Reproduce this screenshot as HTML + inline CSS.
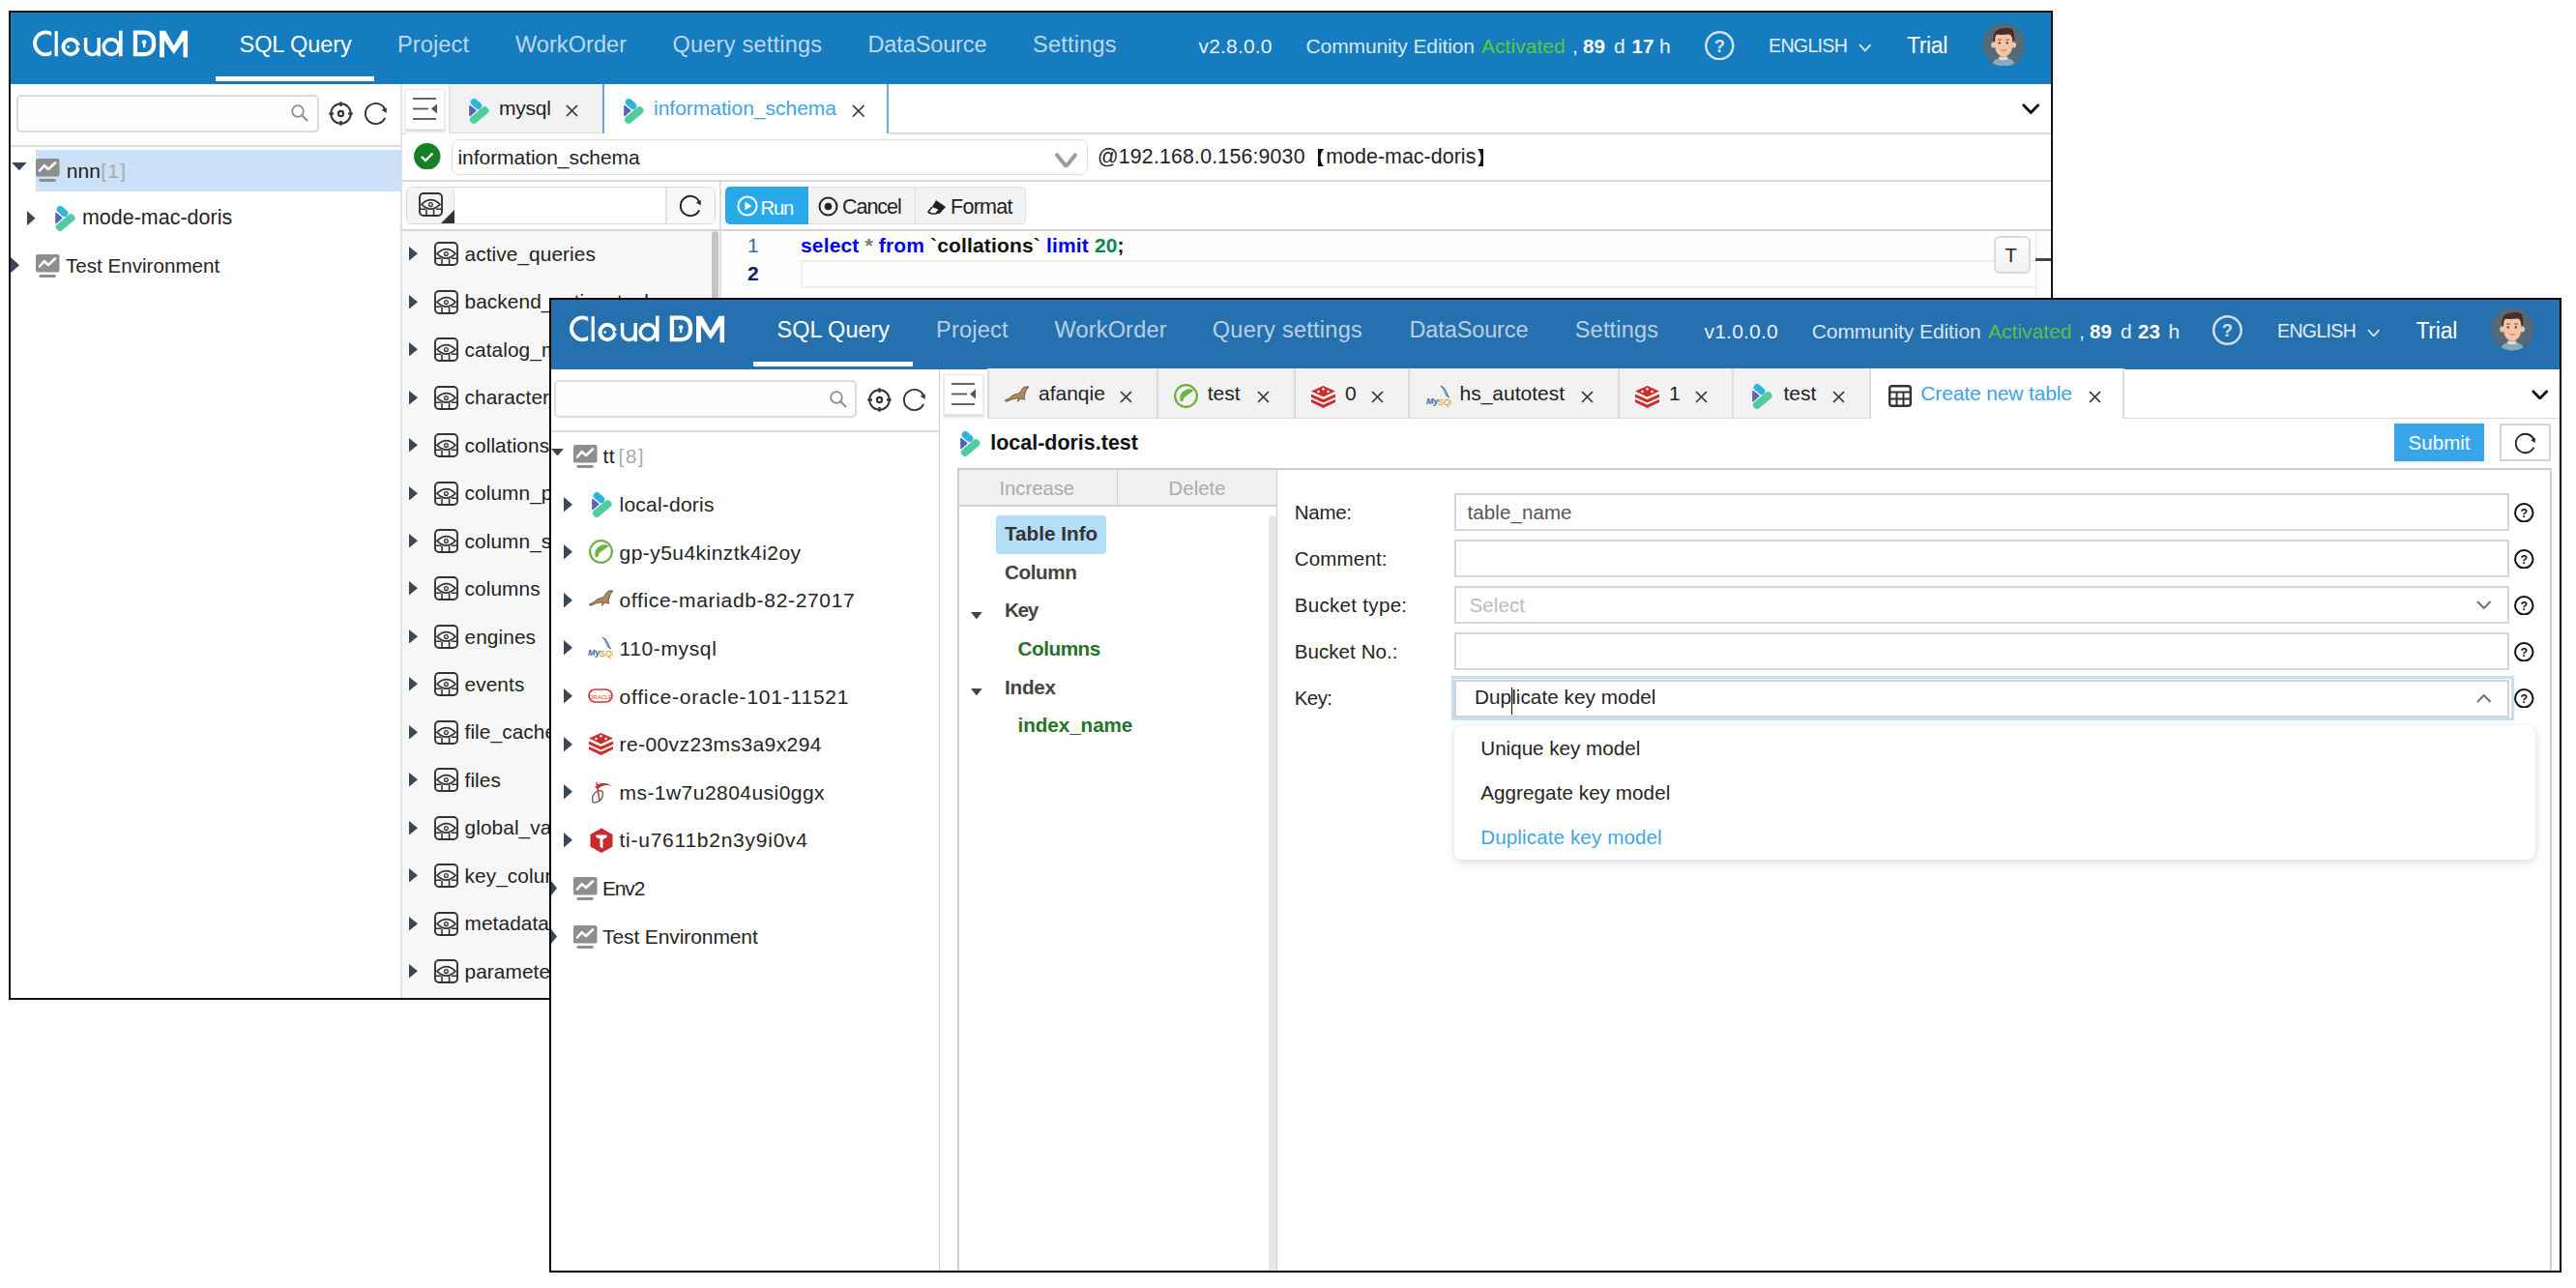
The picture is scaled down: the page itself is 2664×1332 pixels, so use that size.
<!DOCTYPE html><html><head><meta charset="utf-8"><style>
html,body{margin:0;padding:0;background:#fff;width:2664px;height:1332px;overflow:hidden;font-family:"Liberation Sans", sans-serif;}
div,svg{position:absolute;box-sizing:border-box}
.t{white-space:nowrap;line-height:1}
</style></head><body>
<div style="left:9px;top:11px;width:2114px;height:1023px;border:2px solid #151515;background:#fff"></div>
<div style="left:11px;top:13px;width:2110px;height:74px;background:#157CC0"></div>
<svg style="left:0px;top:0px;" width="200" height="70" viewBox="0 0 200 70"><clipPath id="cclip0"><rect x="30" y="28" width="23.2" height="34"/></clipPath>
<g fill="none" stroke="#fff">
<circle cx="47.4" cy="44.85" r="11.45" stroke-width="3.8" clip-path="url(#cclip0)"/>
<circle cx="73.15" cy="48.5" r="7.7" stroke-width="4"/>
<path d="M88.6 39 V49.65 A6.8 6.8 0 0 0 102.2 49.65 V39 M102.2 49 V58.2" stroke-width="3.4"/>
<circle cx="115.05" cy="48.5" r="7.85" stroke-width="3.6"/>
<path d="M139.95 33.65 H149.6 A9 9 0 0 1 158.95 42.65 V47.05 A9 9 0 0 1 149.6 56.05 H139.95 Z" stroke-width="4.3"/>
</g>
<g fill="#fff">
<rect x="56.6" y="32.2" width="3.2" height="26"/>
<rect x="123" y="31.7" width="3.6" height="26.5"/>
<circle cx="70.7" cy="48.6" r="1.45"/>
<circle cx="149.1" cy="43.6" r="2.3"/><rect x="148" y="44" width="2.3" height="5.2"/>
<path d="M165.1 31.7 H171 L179.8 47.2 L188.6 31.7 H194.1 V59.3 H189.5 V42 L179.8 56 L170 42 V59.3 H165.1 Z"/>
</g>
<path d="M80 46.9 L84.5 46.9 L84.5 50.6 L82.2 50.6 Z" fill="#157CC0"/>
</svg>
<div class="t" style="left:247.50px;top:34.61px;font-size:23.5px;color:#fff;letter-spacing:-0.047px;">SQL Query</div>
<div style="left:223px;top:79px;width:164px;height:4.5px;background:#fff"></div>
<div class="t" style="left:411.00px;top:34.61px;font-size:23.5px;color:#BFD7EC;letter-spacing:0.146px;">Project</div>
<div class="t" style="left:533.00px;top:34.61px;font-size:23.5px;color:#BFD7EC;letter-spacing:0.062px;">WorkOrder</div>
<div class="t" style="left:695.50px;top:34.61px;font-size:23.5px;color:#BFD7EC;letter-spacing:0.231px;">Query settings</div>
<div class="t" style="left:897.50px;top:34.61px;font-size:23.5px;color:#BFD7EC;letter-spacing:-0.125px;">DataSource</div>
<div class="t" style="left:1068.00px;top:34.61px;font-size:23.5px;color:#BFD7EC;letter-spacing:0.232px;">Settings</div>
<div class="t" style="left:1239.50px;top:37.22px;font-size:21px;color:#EAF2F9;letter-spacing:0.179px;">v2.8.0.0</div>
<div class="t" style="left:1350.50px;top:37.22px;font-size:21px;color:#D9E8F4;letter-spacing:-0.109px;">Community Edition</div>
<div class="t" style="left:1532.00px;top:37.22px;font-size:21px;color:#5CC93A;letter-spacing:0.047px;">Activated</div>
<div class="t" style="left:1626.00px;top:37.22px;font-size:21px;color:#EAF2F9;">,</div>
<div class="t" style="left:1637.00px;top:37.65px;font-size:20.5px;color:#fff;font-weight:700;">89</div>
<div class="t" style="left:1669.00px;top:37.22px;font-size:21px;color:#EAF2F9;">d</div>
<div class="t" style="left:1687.50px;top:37.65px;font-size:20.5px;color:#fff;font-weight:700;">17</div>
<div class="t" style="left:1716.00px;top:37.22px;font-size:21px;color:#EAF2F9;">h</div>
<svg style="left:1763px;top:31.5px;" width="30.5" height="30.5" viewBox="0 0 30.5 30.5"><circle cx="15.25" cy="15.25" r="14.0" fill="none" stroke="#D3E3F0" stroke-width="2.5" opacity="1"/><text x="15.25" y="21.655" text-anchor="middle" font-family="Liberation Sans" font-weight="bold" font-size="18.3" fill="#D3E3F0" opacity="1">?</text></svg>
<div class="t" style="left:1829.00px;top:37.71px;font-size:19.6px;color:#E6EFF7;letter-spacing:-0.688px;">ENGLISH</div>
<svg style="left:1921.5px;top:45px;" width="13.5" height="8.5" viewBox="0 0 13.5 8.5"><path d="M1 1 L6.75 7.5 L12.5 1" fill="none" stroke="#E6EFF7" stroke-width="1.8"/></svg>
<div class="t" style="left:1972.00px;top:35.83px;font-size:23px;color:#fff;letter-spacing:-0.369px;">Trial</div>
<svg style="left:2049.75px;top:23.75px;" width="44.5" height="44.5" viewBox="0 0 44.5 44.5"><clipPath id="av2072"><circle cx="22.25" cy="22.25" r="22.25"/></clipPath>
<g clip-path="url(#av2072)">
<rect width="44.5" height="44.5" fill="#546A78"/>
<ellipse cx="22" cy="45" rx="12.5" ry="9.8" fill="#8EA9B6"/>
<ellipse cx="21.8" cy="36" rx="4.6" ry="2.2" fill="#D5E3EA"/>
<rect x="18.6" y="29" width="6.4" height="6.6" fill="#E5A38A"/>
<ellipse cx="11.6" cy="22.5" rx="2.4" ry="3" fill="#F6C4A4"/>
<ellipse cx="32.6" cy="22.5" rx="2.4" ry="3" fill="#F6C4A4"/>
<path d="M13 16 Q13 10.5 22 10.5 Q31.4 10.5 31.4 16 L31 26 Q29 34 22.2 34.5 Q15.2 34 13.4 26 Z" fill="#F6C4A4"/>
<path d="M11.2 18.5 Q10.5 6 21 5.5 Q27 4 29.5 6 L30.5 5.5 Q33.8 9.5 33.2 18.5 L31.3 18 Q31 12.8 28.2 11.2 Q21 12.6 14 11.6 Q13.1 14 13.1 18.5 Z" fill="#4A2B25"/>
<rect x="16" y="16.6" width="4" height="0.9" fill="#6B4A40"/><rect x="24" y="16.6" width="4" height="0.9" fill="#6B4A40"/>
<circle cx="17.8" cy="20.5" r="1.15" fill="#5A3A30"/><circle cx="25.8" cy="20.5" r="1.15" fill="#5A3A30"/>
<path d="M19.3 27.3 Q22.2 30 25.1 27.3" fill="none" stroke="#C87D66" stroke-width="1"/>
</g></svg>
<div style="left:17px;top:98px;width:312.5px;height:39px;border:2px solid #D9DBDF;border-radius:5px;background:#FDFDFE"></div>
<svg style="left:300.5px;top:108.2px;" width="18" height="18" viewBox="0 0 18 18"><circle cx="7" cy="7" r="5.8" fill="none" stroke="#8A8F99" stroke-width="1.8"/><line x1="11.2" y1="11.2" x2="16.5" y2="16.5" stroke="#8A8F99" stroke-width="2" stroke-linecap="round"/></svg>
<svg style="left:340.1px;top:104.9px;" width="25" height="25" viewBox="0 0 25 25"><circle cx="12.5" cy="12.5" r="10.3" fill="none" stroke="#333" stroke-width="1.9"/><circle cx="12.5" cy="12.5" r="2.6" fill="none" stroke="#333" stroke-width="2.1"/><g stroke="#333" stroke-width="2.3"><line x1="12.5" y1="0.3" x2="12.5" y2="5"/><line x1="12.5" y1="20" x2="12.5" y2="24.7"/><line x1="0.3" y1="12.5" x2="5" y2="12.5"/><line x1="20" y1="12.5" x2="24.7" y2="12.5"/></g></svg>
<svg style="left:375.5px;top:104.9px;" width="25" height="25" viewBox="0 0 25 25"><path d="M22.1 17 A10.6 10.6 0 1 1 22.1 8" fill="none" stroke="#333" stroke-width="1.9"/><path d="M23.6 12 L18.6 8.6 L23.8 6.6 Z" fill="#333"/></svg>
<div style="left:11px;top:150px;width:403px;height:2px;background:#DCDCDC"></div>
<div style="left:414px;top:87px;width:1.5px;height:946px;background:#E2E2E2"></div>
<div style="left:36.5px;top:154.5px;width:378px;height:43px;background:#CCE1F7"></div>
<svg style="left:12px;top:167.5px;" width="15.7" height="8.3" viewBox="0 0 15.7 8.3"><path d="M0 0 L15.7 0 L7.85 8.3 Z" fill="#3C4858"/></svg>
<svg style="left:37.4px;top:164px;" width="25" height="24" viewBox="0 0 25 24"><rect x="0" y="0" width="24.5" height="18.6" rx="2.2" fill="#8E8E8E"/>
<polyline points="4,12.5 8.8,7.2 13,11 20,4.5" fill="none" stroke="#fff" stroke-width="2.6" stroke-linejoin="round" stroke-linecap="round"/>
<rect x="3.4" y="21" width="17.4" height="3" rx="1.4" fill="#8E8E8E"/></svg>
<div class="t" style="left:68.80px;top:166.02px;font-size:21px;color:#222;">nnn</div>
<div class="t" style="left:104.30px;top:166.02px;font-size:21px;color:#ABABAB;letter-spacing:1.162px;">[1]</div>
<svg style="left:28px;top:218px;" width="8.5" height="15.3" viewBox="0 0 8.5 15.3"><path d="M0 0 L8.5 7.65 L0 15.3 Z" fill="#3C4858"/></svg>
<svg style="left:56.5px;top:213px;" width="21" height="26" viewBox="0 0 21 26"><line x1="5.3" y1="3.6" x2="9.7" y2="7.5" stroke="#2FB5DC" stroke-width="7.2" stroke-linecap="round"/>
<path d="M0.9 7.6 L0.9 17.6 L6.8 12.4 Z" fill="#5068B8" stroke="#5068B8" stroke-width="1.4" stroke-linejoin="round"/>
<line x1="4.9" y1="21.8" x2="16.4" y2="12.3" stroke="#50CD9C" stroke-width="8" stroke-linecap="round"/></svg>
<div class="t" style="left:85.00px;top:214.58px;font-size:21.4px;color:#242424;letter-spacing:0.048px;">mode-mac-doris</div>
<svg style="left:11px;top:266.4px;" width="9" height="16.3" viewBox="0 0 9 16.3"><path d="M0 0 L9 8.15 L0 16.3 Z" fill="#3C4858"/></svg>
<svg style="left:37.4px;top:262.7px;" width="25" height="24" viewBox="0 0 25 24"><rect x="0" y="0" width="24.5" height="18.6" rx="2.2" fill="#8E8E8E"/>
<polyline points="4,12.5 8.8,7.2 13,11 20,4.5" fill="none" stroke="#fff" stroke-width="2.6" stroke-linejoin="round" stroke-linecap="round"/>
<rect x="3.4" y="21" width="17.4" height="3" rx="1.4" fill="#8E8E8E"/></svg>
<div class="t" style="left:68.00px;top:265.06px;font-size:20.6px;color:#242424;letter-spacing:0.008px;">Test Environment</div>
<div style="left:419px;top:92px;width:41px;height:42px;background:#fff;border:1px solid #EBEBEB;box-shadow:0 2px 3px rgba(0,0,0,0.18);box-sizing:border-box"></div>
<svg style="left:427px;top:101px;" width="26" height="24" viewBox="0 0 26 24"><g stroke="#555" stroke-width="1.8"><line x1="0" y1="1" x2="24" y2="1"/><line x1="0" y1="11.5" x2="16" y2="11.5"/><line x1="0" y1="22" x2="24" y2="22"/></g><path d="M25 6.5 L19 11.5 L25 16.5 Z" fill="#555"/></svg>
<div style="left:464px;top:87px;width:160px;height:50.5px;background:#F2F2F2;border-left:1.5px solid #DADADA;border-bottom:1.5px solid #D9D9D9"></div>
<svg style="left:485px;top:102px;" width="21" height="26" viewBox="0 0 21 26"><line x1="5.3" y1="3.6" x2="9.7" y2="7.5" stroke="#2FB5DC" stroke-width="7.2" stroke-linecap="round"/>
<path d="M0.9 7.6 L0.9 17.6 L6.8 12.4 Z" fill="#5068B8" stroke="#5068B8" stroke-width="1.4" stroke-linejoin="round"/>
<line x1="4.9" y1="21.8" x2="16.4" y2="12.3" stroke="#50CD9C" stroke-width="8" stroke-linecap="round"/></svg>
<div class="t" style="left:516.00px;top:100.97px;font-size:21px;color:#222;letter-spacing:-0.219px;">mysql</div>
<svg style="left:585px;top:108px;" width="13" height="13" viewBox="0 0 13 13"><path d="M1 1 L12 12 M12 1 L1 12" stroke="#333" stroke-width="1.7"/></svg>
<div style="left:623px;top:87px;width:296px;height:51px;background:#fff;border-left:2px solid #6FA6E6;border-right:2px solid #6FA6E6"></div>
<svg style="left:644.5px;top:102px;" width="21" height="26" viewBox="0 0 21 26"><line x1="5.3" y1="3.6" x2="9.7" y2="7.5" stroke="#2FB5DC" stroke-width="7.2" stroke-linecap="round"/>
<path d="M0.9 7.6 L0.9 17.6 L6.8 12.4 Z" fill="#5068B8" stroke="#5068B8" stroke-width="1.4" stroke-linejoin="round"/>
<line x1="4.9" y1="21.8" x2="16.4" y2="12.3" stroke="#50CD9C" stroke-width="8" stroke-linecap="round"/></svg>
<div class="t" style="left:676.00px;top:100.97px;font-size:21px;color:#3DA5E4;letter-spacing:-0.007px;">information_schema</div>
<svg style="left:881px;top:108px;" width="13.5" height="13.5" viewBox="0 0 13.5 13.5"><path d="M1 1 L12.5 12.5 M12.5 1 L1 12.5" stroke="#333" stroke-width="1.7"/></svg>
<div style="left:919px;top:137px;width:1202px;height:1.5px;background:#DCDCDC"></div>
<div style="left:415px;top:137px;width:4px;height:1.5px;background:#DCDCDC"></div>
<svg style="left:2091px;top:107px;" width="18.5" height="10.5" viewBox="0 0 18.5 10.5"><path d="M1 1 L9.25 9.5 L17.5 1" fill="none" stroke="#111" stroke-width="2.8"/></svg>
<svg style="left:428px;top:147.5px;" width="27.5" height="27.5" viewBox="0 0 27.5 27.5"><circle cx="13.75" cy="13.75" r="13.75" fill="#177F28"/><path d="M8 14 L12 18 L19.5 10.5" fill="none" stroke="#fff" stroke-width="2.4"/></svg>
<div style="left:467px;top:144px;width:658px;height:37px;border:1.5px solid #DCDCDC;border-radius:8px;background:#fff"></div>
<div class="t" style="left:473.50px;top:152.22px;font-size:21px;color:#222;letter-spacing:-0.051px;">information_schema</div>
<svg style="left:1091px;top:157.5px;" width="23" height="15" viewBox="0 0 23 15"><path d="M1 1 L11.5 14 L22 1" fill="none" stroke="#9B9B9B" stroke-width="4"/></svg>
<div class="t" style="left:1135.00px;top:151.97px;font-size:21.3px;color:#222;letter-spacing:0.188px;">@192.168.0.156:9030</div>
<svg style="left:1362.6px;top:153.6px;" width="6.2" height="18.2" viewBox="0 0 6.2 18.2"><path d="M6.2 0 H0 V18.2 H6.2 Q2.6 14.5 2.6 9.1 Q2.6 3.7 6.2 0 Z" fill="#111"/></svg>
<div class="t" style="left:1371.20px;top:151.88px;font-size:21.4px;color:#222;letter-spacing:0.048px;">mode-mac-doris</div>
<svg style="left:1527.8px;top:153.6px;" width="6.2" height="18.2" viewBox="0 0 6.2 18.2"><path d="M0 0 H6.2 V18.2 H0 Q3.6 14.5 3.6 9.1 Q3.6 3.7 0 0 Z" fill="#111"/></svg>
<div style="left:415px;top:186px;width:1706px;height:2px;background:#D9D9D9"></div>
<div style="left:419.5px;top:193px;width:320px;height:38.5px;border:1.5px solid #DADADA;border-radius:6px;background:#fff"></div>
<div style="left:420.5px;top:194px;width:49.5px;height:36.5px;background:#F4F4F4;border-right:1px solid #E2E2E2;border-radius:5px 0 0 5px"></div>
<svg style="left:432.5px;top:199px;" width="25" height="25" viewBox="0 0 25 25"><rect x="1" y="1" width="23" height="23" rx="4" fill="none" stroke="#333" stroke-width="1.9"/>
<path d="M3 12.4 Q12.5 3 22 12.4 Q12.5 21.8 3 12.4 Z" fill="none" stroke="#333" stroke-width="1.6"/>
<circle cx="12.4" cy="12.6" r="1.9" fill="none" stroke="#333" stroke-width="1.3"/>
<path d="M1 17.3 H7 M18 17.3 H24 M8 17.5 V24 M15.6 17.5 V24" stroke="#333" stroke-width="1.6"/></svg>
<svg style="left:456px;top:217px;" width="14" height="14" viewBox="0 0 14 14"><path d="M14 0 L14 14 L0 14 Z" fill="#333"/></svg>
<div style="left:688px;top:194px;width:1.5px;height:36.5px;background:#E2E2E2"></div>
<div style="left:689.5px;top:194px;width:49px;height:36.5px;background:#F8F8F8;border-radius:0 5px 5px 0"></div>
<svg style="left:701.5px;top:201px;" width="24" height="24" viewBox="0 0 25 25"><path d="M22.1 17 A10.6 10.6 0 1 1 22.1 8" fill="none" stroke="#222" stroke-width="2"/><path d="M23.6 12 L18.6 8.6 L23.8 6.6 Z" fill="#222"/></svg>
<div style="left:744px;top:187px;width:1.5px;height:846px;background:#DEDEDE"></div>
<div style="left:750px;top:192.5px;width:86px;height:39.5px;background:#27A9EA;border-radius:5px 0 0 5px"></div>
<svg style="left:762px;top:201.5px;" width="22" height="22" viewBox="0 0 22 22"><circle cx="11" cy="11" r="9.6" fill="none" stroke="#fff" stroke-width="2"/><path d="M8.5 6.5 L15.5 11 L8.5 15.5 Z" fill="#fff"/></svg>
<div class="t" style="left:786.50px;top:205.32px;font-size:20.3px;color:#fff;letter-spacing:-1.262px;">Run</div>
<div style="left:836px;top:192.5px;width:225px;height:39.5px;background:#F3F3F3;border:1.5px solid #DFDFDF;border-left:none;border-radius:0 5px 5px 0"></div>
<div style="left:945.5px;top:193.5px;width:1.5px;height:38px;background:#DFDFDF"></div>
<svg style="left:846px;top:203px;" width="21" height="21" viewBox="0 0 21 21"><circle cx="10.5" cy="10.5" r="9" fill="none" stroke="#222" stroke-width="2"/><circle cx="10.5" cy="10.5" r="3.8" fill="#222"/></svg>
<div class="t" style="left:871.00px;top:204.30px;font-size:21.5px;color:#222;letter-spacing:-1.025px;">Cancel</div>
<svg style="left:958.5px;top:206px;" width="20" height="16" viewBox="0 0 20 16"><path d="M9 1 L19 8 L12.5 15 L1 15 Z" fill="#222"/><path d="M5 8 L1 13 L4 15 L9 15 L12 11" fill="#fff" stroke="#222" stroke-width="1.6"/></svg>
<div class="t" style="left:983.00px;top:204.30px;font-size:21.5px;color:#222;letter-spacing:-0.725px;">Format</div>
<div style="left:415px;top:237px;width:1706px;height:1.5px;background:#D5D5D5"></div>
<div style="left:415.5px;top:238.5px;width:328.5px;height:794.5px;background:#F7F7F7"></div>
<div style="left:735.5px;top:239px;width:7.5px;height:794px;background:#C4C4C4;border-radius:4px"></div>
<svg style="left:423px;top:255.3px;" width="9" height="14.6" viewBox="0 0 9 14.6"><path d="M0 0 L9 7.3 L0 14.6 Z" fill="#3C4858"/></svg>
<svg style="left:448.8px;top:250.3px;" width="25" height="25" viewBox="0 0 25 25"><rect x="1" y="1" width="23" height="23" rx="4" fill="none" stroke="#333" stroke-width="1.9"/>
<path d="M3 12.4 Q12.5 3 22 12.4 Q12.5 21.8 3 12.4 Z" fill="none" stroke="#333" stroke-width="1.6"/>
<circle cx="12.4" cy="12.6" r="1.9" fill="none" stroke="#333" stroke-width="1.3"/>
<path d="M1 17.3 H7 M18 17.3 H24 M8 17.5 V24 M15.6 17.5 V24" stroke="#333" stroke-width="1.6"/></svg>
<div class="t" style="left:480.50px;top:252.99px;font-size:20.8px;color:#222;letter-spacing:0.100px;">active_queries</div>
<svg style="left:423px;top:304.75px;" width="9" height="14.6" viewBox="0 0 9 14.6"><path d="M0 0 L9 7.3 L0 14.6 Z" fill="#3C4858"/></svg>
<svg style="left:448.8px;top:299.75px;" width="25" height="25" viewBox="0 0 25 25"><rect x="1" y="1" width="23" height="23" rx="4" fill="none" stroke="#333" stroke-width="1.9"/>
<path d="M3 12.4 Q12.5 3 22 12.4 Q12.5 21.8 3 12.4 Z" fill="none" stroke="#333" stroke-width="1.6"/>
<circle cx="12.4" cy="12.6" r="1.9" fill="none" stroke="#333" stroke-width="1.3"/>
<path d="M1 17.3 H7 M18 17.3 H24 M8 17.5 V24 M15.6 17.5 V24" stroke="#333" stroke-width="1.6"/></svg>
<div class="t" style="left:480.50px;top:302.44px;font-size:20.8px;color:#222;letter-spacing:0.100px;">backend_active_tasks</div>
<svg style="left:423px;top:354.2px;" width="9" height="14.6" viewBox="0 0 9 14.6"><path d="M0 0 L9 7.3 L0 14.6 Z" fill="#3C4858"/></svg>
<svg style="left:448.8px;top:349.2px;" width="25" height="25" viewBox="0 0 25 25"><rect x="1" y="1" width="23" height="23" rx="4" fill="none" stroke="#333" stroke-width="1.9"/>
<path d="M3 12.4 Q12.5 3 22 12.4 Q12.5 21.8 3 12.4 Z" fill="none" stroke="#333" stroke-width="1.6"/>
<circle cx="12.4" cy="12.6" r="1.9" fill="none" stroke="#333" stroke-width="1.3"/>
<path d="M1 17.3 H7 M18 17.3 H24 M8 17.5 V24 M15.6 17.5 V24" stroke="#333" stroke-width="1.6"/></svg>
<div class="t" style="left:480.50px;top:351.89px;font-size:20.8px;color:#222;letter-spacing:0.100px;">catalog_meta_cache_statistics</div>
<svg style="left:423px;top:403.65000000000003px;" width="9" height="14.6" viewBox="0 0 9 14.6"><path d="M0 0 L9 7.3 L0 14.6 Z" fill="#3C4858"/></svg>
<svg style="left:448.8px;top:398.65000000000003px;" width="25" height="25" viewBox="0 0 25 25"><rect x="1" y="1" width="23" height="23" rx="4" fill="none" stroke="#333" stroke-width="1.9"/>
<path d="M3 12.4 Q12.5 3 22 12.4 Q12.5 21.8 3 12.4 Z" fill="none" stroke="#333" stroke-width="1.6"/>
<circle cx="12.4" cy="12.6" r="1.9" fill="none" stroke="#333" stroke-width="1.3"/>
<path d="M1 17.3 H7 M18 17.3 H24 M8 17.5 V24 M15.6 17.5 V24" stroke="#333" stroke-width="1.6"/></svg>
<div class="t" style="left:480.50px;top:401.34px;font-size:20.8px;color:#222;letter-spacing:0.100px;">character_sets</div>
<svg style="left:423px;top:453.1px;" width="9" height="14.6" viewBox="0 0 9 14.6"><path d="M0 0 L9 7.3 L0 14.6 Z" fill="#3C4858"/></svg>
<svg style="left:448.8px;top:448.1px;" width="25" height="25" viewBox="0 0 25 25"><rect x="1" y="1" width="23" height="23" rx="4" fill="none" stroke="#333" stroke-width="1.9"/>
<path d="M3 12.4 Q12.5 3 22 12.4 Q12.5 21.8 3 12.4 Z" fill="none" stroke="#333" stroke-width="1.6"/>
<circle cx="12.4" cy="12.6" r="1.9" fill="none" stroke="#333" stroke-width="1.3"/>
<path d="M1 17.3 H7 M18 17.3 H24 M8 17.5 V24 M15.6 17.5 V24" stroke="#333" stroke-width="1.6"/></svg>
<div class="t" style="left:480.50px;top:450.79px;font-size:20.8px;color:#222;letter-spacing:0.100px;">collations</div>
<svg style="left:423px;top:502.55px;" width="9" height="14.6" viewBox="0 0 9 14.6"><path d="M0 0 L9 7.3 L0 14.6 Z" fill="#3C4858"/></svg>
<svg style="left:448.8px;top:497.55px;" width="25" height="25" viewBox="0 0 25 25"><rect x="1" y="1" width="23" height="23" rx="4" fill="none" stroke="#333" stroke-width="1.9"/>
<path d="M3 12.4 Q12.5 3 22 12.4 Q12.5 21.8 3 12.4 Z" fill="none" stroke="#333" stroke-width="1.6"/>
<circle cx="12.4" cy="12.6" r="1.9" fill="none" stroke="#333" stroke-width="1.3"/>
<path d="M1 17.3 H7 M18 17.3 H24 M8 17.5 V24 M15.6 17.5 V24" stroke="#333" stroke-width="1.6"/></svg>
<div class="t" style="left:480.50px;top:500.24px;font-size:20.8px;color:#222;letter-spacing:0.100px;">column_privileges</div>
<svg style="left:423px;top:552.0000000000001px;" width="9" height="14.6" viewBox="0 0 9 14.6"><path d="M0 0 L9 7.3 L0 14.6 Z" fill="#3C4858"/></svg>
<svg style="left:448.8px;top:547.0000000000001px;" width="25" height="25" viewBox="0 0 25 25"><rect x="1" y="1" width="23" height="23" rx="4" fill="none" stroke="#333" stroke-width="1.9"/>
<path d="M3 12.4 Q12.5 3 22 12.4 Q12.5 21.8 3 12.4 Z" fill="none" stroke="#333" stroke-width="1.6"/>
<circle cx="12.4" cy="12.6" r="1.9" fill="none" stroke="#333" stroke-width="1.3"/>
<path d="M1 17.3 H7 M18 17.3 H24 M8 17.5 V24 M15.6 17.5 V24" stroke="#333" stroke-width="1.6"/></svg>
<div class="t" style="left:480.50px;top:549.69px;font-size:20.8px;color:#222;letter-spacing:0.100px;">column_statistics</div>
<svg style="left:423px;top:601.45px;" width="9" height="14.6" viewBox="0 0 9 14.6"><path d="M0 0 L9 7.3 L0 14.6 Z" fill="#3C4858"/></svg>
<svg style="left:448.8px;top:596.45px;" width="25" height="25" viewBox="0 0 25 25"><rect x="1" y="1" width="23" height="23" rx="4" fill="none" stroke="#333" stroke-width="1.9"/>
<path d="M3 12.4 Q12.5 3 22 12.4 Q12.5 21.8 3 12.4 Z" fill="none" stroke="#333" stroke-width="1.6"/>
<circle cx="12.4" cy="12.6" r="1.9" fill="none" stroke="#333" stroke-width="1.3"/>
<path d="M1 17.3 H7 M18 17.3 H24 M8 17.5 V24 M15.6 17.5 V24" stroke="#333" stroke-width="1.6"/></svg>
<div class="t" style="left:480.50px;top:599.14px;font-size:20.8px;color:#222;letter-spacing:0.100px;">columns</div>
<svg style="left:423px;top:650.9000000000001px;" width="9" height="14.6" viewBox="0 0 9 14.6"><path d="M0 0 L9 7.3 L0 14.6 Z" fill="#3C4858"/></svg>
<svg style="left:448.8px;top:645.9000000000001px;" width="25" height="25" viewBox="0 0 25 25"><rect x="1" y="1" width="23" height="23" rx="4" fill="none" stroke="#333" stroke-width="1.9"/>
<path d="M3 12.4 Q12.5 3 22 12.4 Q12.5 21.8 3 12.4 Z" fill="none" stroke="#333" stroke-width="1.6"/>
<circle cx="12.4" cy="12.6" r="1.9" fill="none" stroke="#333" stroke-width="1.3"/>
<path d="M1 17.3 H7 M18 17.3 H24 M8 17.5 V24 M15.6 17.5 V24" stroke="#333" stroke-width="1.6"/></svg>
<div class="t" style="left:480.50px;top:648.59px;font-size:20.8px;color:#222;letter-spacing:0.100px;">engines</div>
<svg style="left:423px;top:700.3500000000001px;" width="9" height="14.6" viewBox="0 0 9 14.6"><path d="M0 0 L9 7.3 L0 14.6 Z" fill="#3C4858"/></svg>
<svg style="left:448.8px;top:695.3500000000001px;" width="25" height="25" viewBox="0 0 25 25"><rect x="1" y="1" width="23" height="23" rx="4" fill="none" stroke="#333" stroke-width="1.9"/>
<path d="M3 12.4 Q12.5 3 22 12.4 Q12.5 21.8 3 12.4 Z" fill="none" stroke="#333" stroke-width="1.6"/>
<circle cx="12.4" cy="12.6" r="1.9" fill="none" stroke="#333" stroke-width="1.3"/>
<path d="M1 17.3 H7 M18 17.3 H24 M8 17.5 V24 M15.6 17.5 V24" stroke="#333" stroke-width="1.6"/></svg>
<div class="t" style="left:480.50px;top:698.04px;font-size:20.8px;color:#222;letter-spacing:0.100px;">events</div>
<svg style="left:423px;top:749.8000000000001px;" width="9" height="14.6" viewBox="0 0 9 14.6"><path d="M0 0 L9 7.3 L0 14.6 Z" fill="#3C4858"/></svg>
<svg style="left:448.8px;top:744.8000000000001px;" width="25" height="25" viewBox="0 0 25 25"><rect x="1" y="1" width="23" height="23" rx="4" fill="none" stroke="#333" stroke-width="1.9"/>
<path d="M3 12.4 Q12.5 3 22 12.4 Q12.5 21.8 3 12.4 Z" fill="none" stroke="#333" stroke-width="1.6"/>
<circle cx="12.4" cy="12.6" r="1.9" fill="none" stroke="#333" stroke-width="1.3"/>
<path d="M1 17.3 H7 M18 17.3 H24 M8 17.5 V24 M15.6 17.5 V24" stroke="#333" stroke-width="1.6"/></svg>
<div class="t" style="left:480.50px;top:747.49px;font-size:20.8px;color:#222;letter-spacing:0.100px;">file_cache_statistics</div>
<svg style="left:423px;top:799.2500000000001px;" width="9" height="14.6" viewBox="0 0 9 14.6"><path d="M0 0 L9 7.3 L0 14.6 Z" fill="#3C4858"/></svg>
<svg style="left:448.8px;top:794.2500000000001px;" width="25" height="25" viewBox="0 0 25 25"><rect x="1" y="1" width="23" height="23" rx="4" fill="none" stroke="#333" stroke-width="1.9"/>
<path d="M3 12.4 Q12.5 3 22 12.4 Q12.5 21.8 3 12.4 Z" fill="none" stroke="#333" stroke-width="1.6"/>
<circle cx="12.4" cy="12.6" r="1.9" fill="none" stroke="#333" stroke-width="1.3"/>
<path d="M1 17.3 H7 M18 17.3 H24 M8 17.5 V24 M15.6 17.5 V24" stroke="#333" stroke-width="1.6"/></svg>
<div class="t" style="left:480.50px;top:796.94px;font-size:20.8px;color:#222;letter-spacing:0.100px;">files</div>
<svg style="left:423px;top:848.7000000000002px;" width="9" height="14.6" viewBox="0 0 9 14.6"><path d="M0 0 L9 7.3 L0 14.6 Z" fill="#3C4858"/></svg>
<svg style="left:448.8px;top:843.7000000000002px;" width="25" height="25" viewBox="0 0 25 25"><rect x="1" y="1" width="23" height="23" rx="4" fill="none" stroke="#333" stroke-width="1.9"/>
<path d="M3 12.4 Q12.5 3 22 12.4 Q12.5 21.8 3 12.4 Z" fill="none" stroke="#333" stroke-width="1.6"/>
<circle cx="12.4" cy="12.6" r="1.9" fill="none" stroke="#333" stroke-width="1.3"/>
<path d="M1 17.3 H7 M18 17.3 H24 M8 17.5 V24 M15.6 17.5 V24" stroke="#333" stroke-width="1.6"/></svg>
<div class="t" style="left:480.50px;top:846.39px;font-size:20.8px;color:#222;letter-spacing:0.100px;">global_variables</div>
<svg style="left:423px;top:898.1500000000001px;" width="9" height="14.6" viewBox="0 0 9 14.6"><path d="M0 0 L9 7.3 L0 14.6 Z" fill="#3C4858"/></svg>
<svg style="left:448.8px;top:893.1500000000001px;" width="25" height="25" viewBox="0 0 25 25"><rect x="1" y="1" width="23" height="23" rx="4" fill="none" stroke="#333" stroke-width="1.9"/>
<path d="M3 12.4 Q12.5 3 22 12.4 Q12.5 21.8 3 12.4 Z" fill="none" stroke="#333" stroke-width="1.6"/>
<circle cx="12.4" cy="12.6" r="1.9" fill="none" stroke="#333" stroke-width="1.3"/>
<path d="M1 17.3 H7 M18 17.3 H24 M8 17.5 V24 M15.6 17.5 V24" stroke="#333" stroke-width="1.6"/></svg>
<div class="t" style="left:480.50px;top:895.84px;font-size:20.8px;color:#222;letter-spacing:0.100px;">key_column_usage</div>
<svg style="left:423px;top:947.6000000000001px;" width="9" height="14.6" viewBox="0 0 9 14.6"><path d="M0 0 L9 7.3 L0 14.6 Z" fill="#3C4858"/></svg>
<svg style="left:448.8px;top:942.6000000000001px;" width="25" height="25" viewBox="0 0 25 25"><rect x="1" y="1" width="23" height="23" rx="4" fill="none" stroke="#333" stroke-width="1.9"/>
<path d="M3 12.4 Q12.5 3 22 12.4 Q12.5 21.8 3 12.4 Z" fill="none" stroke="#333" stroke-width="1.6"/>
<circle cx="12.4" cy="12.6" r="1.9" fill="none" stroke="#333" stroke-width="1.3"/>
<path d="M1 17.3 H7 M18 17.3 H24 M8 17.5 V24 M15.6 17.5 V24" stroke="#333" stroke-width="1.6"/></svg>
<div class="t" style="left:480.50px;top:945.29px;font-size:20.8px;color:#222;letter-spacing:0.100px;">metadata_name_ids</div>
<svg style="left:423px;top:997.0500000000001px;" width="9" height="14.6" viewBox="0 0 9 14.6"><path d="M0 0 L9 7.3 L0 14.6 Z" fill="#3C4858"/></svg>
<svg style="left:448.8px;top:992.0500000000001px;" width="25" height="25" viewBox="0 0 25 25"><rect x="1" y="1" width="23" height="23" rx="4" fill="none" stroke="#333" stroke-width="1.9"/>
<path d="M3 12.4 Q12.5 3 22 12.4 Q12.5 21.8 3 12.4 Z" fill="none" stroke="#333" stroke-width="1.6"/>
<circle cx="12.4" cy="12.6" r="1.9" fill="none" stroke="#333" stroke-width="1.3"/>
<path d="M1 17.3 H7 M18 17.3 H24 M8 17.5 V24 M15.6 17.5 V24" stroke="#333" stroke-width="1.6"/></svg>
<div class="t" style="left:480.50px;top:994.74px;font-size:20.8px;color:#222;letter-spacing:0.100px;">parameters</div>
<div style="left:745.5px;top:238.5px;width:1375.5px;height:794.5px;background:#FEFEFC"></div>
<div class="t" style="left:773.00px;top:242.72px;font-size:21px;color:#237893;">1</div>
<div class="t" style="left:773.00px;top:272.22px;font-size:21px;color:#0B216F;font-weight:700;">2</div>
<div class="t" style="left:828.00px;top:242.72px;font-size:21px;color:#111;font-weight:700;letter-spacing:0.154px;"><span style="color:#0000F0">select</span> <span style="color:#777">*</span> <span style="color:#0000F0">from</span> <span style="color:#111">`collations`</span> <span style="color:#0000F0">limit</span> <span style="color:#098658">20</span><span style="color:#111">;</span></div>
<div style="left:828px;top:269px;width:1277px;height:29px;border:2px solid #EDEDED;border-right:none;background:transparent"></div>
<div style="left:2105px;top:238.5px;width:1px;height:794px;background:#E8E8E8"></div>
<div style="left:2105px;top:267px;width:16px;height:2.5px;background:#444"></div>
<div style="left:2061.5px;top:243.8px;width:38.5px;height:38.8px;background:linear-gradient(#FDFDFD,#F1F2F4);border:2px solid #D8DADF;border-radius:6px"></div>
<div class="t" style="left:2073.50px;top:253.57px;font-size:20px;color:#222;">T</div>
<div style="left:9px;top:11px;width:2114px;height:1023px;border:2px solid #151515;background:transparent"></div>
<div style="left:568px;top:308px;width:2081px;height:1008px;border:2px solid #000;background:#fff"></div>
<div style="left:570px;top:310px;width:2077px;height:71.5px;background:#2571AF"></div>
<svg style="left:555px;top:295.2px;" width="200" height="70" viewBox="0 0 200 70"><clipPath id="cclip555"><rect x="30" y="28" width="23.2" height="34"/></clipPath>
<g fill="none" stroke="#fff">
<circle cx="47.4" cy="44.85" r="11.45" stroke-width="3.8" clip-path="url(#cclip555)"/>
<circle cx="73.15" cy="48.5" r="7.7" stroke-width="4"/>
<path d="M88.6 39 V49.65 A6.8 6.8 0 0 0 102.2 49.65 V39 M102.2 49 V58.2" stroke-width="3.4"/>
<circle cx="115.05" cy="48.5" r="7.85" stroke-width="3.6"/>
<path d="M139.95 33.65 H149.6 A9 9 0 0 1 158.95 42.65 V47.05 A9 9 0 0 1 149.6 56.05 H139.95 Z" stroke-width="4.3"/>
</g>
<g fill="#fff">
<rect x="56.6" y="32.2" width="3.2" height="26"/>
<rect x="123" y="31.7" width="3.6" height="26.5"/>
<circle cx="70.7" cy="48.6" r="1.45"/>
<circle cx="149.1" cy="43.6" r="2.3"/><rect x="148" y="44" width="2.3" height="5.2"/>
<path d="M165.1 31.7 H171 L179.8 47.2 L188.6 31.7 H194.1 V59.3 H189.5 V42 L179.8 56 L170 42 V59.3 H165.1 Z"/>
</g>
<path d="M80 46.9 L84.5 46.9 L84.5 50.6 L82.2 50.6 Z" fill="#2571AF"/>
</svg>
<div class="t" style="left:803.50px;top:329.61px;font-size:23.5px;color:#fff;letter-spacing:-0.016px;">SQL Query</div>
<div style="left:779px;top:374px;width:165px;height:4.5px;background:#fff"></div>
<div class="t" style="left:968.00px;top:329.61px;font-size:23.5px;color:#BACFE3;letter-spacing:0.229px;">Project</div>
<div class="t" style="left:1090.50px;top:329.61px;font-size:23.5px;color:#BACFE3;letter-spacing:0.188px;">WorkOrder</div>
<div class="t" style="left:1253.75px;top:329.61px;font-size:23.5px;color:#BACFE3;letter-spacing:0.269px;">Query settings</div>
<div class="t" style="left:1457.50px;top:329.61px;font-size:23.5px;color:#BACFE3;letter-spacing:-0.125px;">DataSource</div>
<div class="t" style="left:1628.75px;top:329.61px;font-size:23.5px;color:#BACFE3;letter-spacing:0.196px;">Settings</div>
<div class="t" style="left:1762.50px;top:332.22px;font-size:21px;color:#EAF0F7;letter-spacing:0.214px;">v1.0.0.0</div>
<div class="t" style="left:1873.75px;top:332.22px;font-size:21px;color:#D8E4F0;letter-spacing:-0.078px;">Community Edition</div>
<div class="t" style="left:2056.00px;top:332.22px;font-size:21px;color:#5CC044;letter-spacing:0.016px;">Activated</div>
<div class="t" style="left:2150.00px;top:332.22px;font-size:21px;color:#EAF0F7;">,</div>
<div class="t" style="left:2161.00px;top:332.65px;font-size:20.5px;color:#fff;font-weight:700;">89</div>
<div class="t" style="left:2193.00px;top:332.22px;font-size:21px;color:#EAF0F7;">d</div>
<div class="t" style="left:2211.00px;top:332.65px;font-size:20.5px;color:#fff;font-weight:700;">23</div>
<div class="t" style="left:2242.50px;top:332.22px;font-size:21px;color:#EAF0F7;">h</div>
<svg style="left:2287.5px;top:326px;" width="31" height="31" viewBox="0 0 31 31"><circle cx="15.5" cy="15.5" r="14.25" fill="none" stroke="#D1DFEC" stroke-width="2.5" opacity="1"/><text x="15.5" y="22.009999999999998" text-anchor="middle" font-family="Liberation Sans" font-weight="bold" font-size="18.599999999999998" fill="#D1DFEC" opacity="1">?</text></svg>
<div class="t" style="left:2355.00px;top:332.71px;font-size:19.6px;color:#E4ECF5;letter-spacing:-0.688px;">ENGLISH</div>
<svg style="left:2448px;top:339.8px;" width="13.5" height="8.5" viewBox="0 0 13.5 8.5"><path d="M1 1 L6.75 7.5 L12.5 1" fill="none" stroke="#E4ECF5" stroke-width="1.8"/></svg>
<div class="t" style="left:2498.40px;top:330.53px;font-size:23px;color:#fff;letter-spacing:-0.219px;">Trial</div>
<svg style="left:2576.25px;top:318.35px;" width="44.5" height="44.5" viewBox="0 0 44.5 44.5"><clipPath id="av2598"><circle cx="22.25" cy="22.25" r="22.25"/></clipPath>
<g clip-path="url(#av2598)">
<rect width="44.5" height="44.5" fill="#546A78"/>
<ellipse cx="22" cy="45" rx="12.5" ry="9.8" fill="#8EA9B6"/>
<ellipse cx="21.8" cy="36" rx="4.6" ry="2.2" fill="#D5E3EA"/>
<rect x="18.6" y="29" width="6.4" height="6.6" fill="#E5A38A"/>
<ellipse cx="11.6" cy="22.5" rx="2.4" ry="3" fill="#F6C4A4"/>
<ellipse cx="32.6" cy="22.5" rx="2.4" ry="3" fill="#F6C4A4"/>
<path d="M13 16 Q13 10.5 22 10.5 Q31.4 10.5 31.4 16 L31 26 Q29 34 22.2 34.5 Q15.2 34 13.4 26 Z" fill="#F6C4A4"/>
<path d="M11.2 18.5 Q10.5 6 21 5.5 Q27 4 29.5 6 L30.5 5.5 Q33.8 9.5 33.2 18.5 L31.3 18 Q31 12.8 28.2 11.2 Q21 12.6 14 11.6 Q13.1 14 13.1 18.5 Z" fill="#4A2B25"/>
<rect x="16" y="16.6" width="4" height="0.9" fill="#6B4A40"/><rect x="24" y="16.6" width="4" height="0.9" fill="#6B4A40"/>
<circle cx="17.8" cy="20.5" r="1.15" fill="#5A3A30"/><circle cx="25.8" cy="20.5" r="1.15" fill="#5A3A30"/>
<path d="M19.3 27.3 Q22.2 30 25.1 27.3" fill="none" stroke="#C87D66" stroke-width="1"/>
</g></svg>
<div style="left:572.5px;top:393px;width:313px;height:39px;border:2px solid #D9DBDF;border-radius:5px;background:#FDFDFE"></div>
<svg style="left:857.5px;top:403.5px;" width="18" height="18" viewBox="0 0 18 18"><circle cx="7" cy="7" r="5.8" fill="none" stroke="#8A8F99" stroke-width="1.8"/><line x1="11.2" y1="11.2" x2="16.5" y2="16.5" stroke="#8A8F99" stroke-width="2" stroke-linecap="round"/></svg>
<svg style="left:897px;top:400.5px;" width="25" height="25" viewBox="0 0 25 25"><circle cx="12.5" cy="12.5" r="10.3" fill="none" stroke="#333" stroke-width="1.9"/><circle cx="12.5" cy="12.5" r="2.6" fill="none" stroke="#333" stroke-width="2.1"/><g stroke="#333" stroke-width="2.3"><line x1="12.5" y1="0.3" x2="12.5" y2="5"/><line x1="12.5" y1="20" x2="12.5" y2="24.7"/><line x1="0.3" y1="12.5" x2="5" y2="12.5"/><line x1="20" y1="12.5" x2="24.7" y2="12.5"/></g></svg>
<svg style="left:932.5px;top:400.5px;" width="25" height="25" viewBox="0 0 25 25"><path d="M22.1 17 A10.6 10.6 0 1 1 22.1 8" fill="none" stroke="#333" stroke-width="1.9"/><path d="M23.6 12 L18.6 8.6 L23.8 6.6 Z" fill="#333"/></svg>
<div style="left:570px;top:445px;width:401px;height:2px;background:#DCDCDC"></div>
<div style="left:970.5px;top:381.5px;width:1.5px;height:933px;background:#CBCBCB"></div>
<svg style="left:570px;top:463.7px;" width="13" height="7.5" viewBox="0 0 13 7.5"><path d="M0 0 L13 0 L6.5 7.5 Z" fill="#3C4858"/></svg>
<svg style="left:592.5px;top:459.5px;" width="25" height="24" viewBox="0 0 25 24"><rect x="0" y="0" width="24.5" height="18.6" rx="2.2" fill="#8E8E8E"/>
<polyline points="4,12.5 8.8,7.2 13,11 20,4.5" fill="none" stroke="#fff" stroke-width="2.6" stroke-linejoin="round" stroke-linecap="round"/>
<rect x="3.4" y="21" width="17.4" height="3" rx="1.4" fill="#8E8E8E"/></svg>
<div class="t" style="left:623.50px;top:460.97px;font-size:21px;color:#222;letter-spacing:0.375px;">tt</div>
<div class="t" style="left:639.50px;top:460.97px;font-size:21px;color:#ABABAB;letter-spacing:1.312px;">[8]</div>
<svg style="left:583px;top:513.5px;" width="9" height="15.5" viewBox="0 0 9 15.5"><path d="M0 0 L9 7.75 L0 15.5 Z" fill="#3C4858"/></svg>
<svg style="left:611.5px;top:508.5px;" width="21" height="26" viewBox="0 0 21 26"><line x1="5.3" y1="3.6" x2="9.7" y2="7.5" stroke="#2FB5DC" stroke-width="7.2" stroke-linecap="round"/>
<path d="M0.9 7.6 L0.9 17.6 L6.8 12.4 Z" fill="#5068B8" stroke="#5068B8" stroke-width="1.4" stroke-linejoin="round"/>
<line x1="4.9" y1="21.8" x2="16.4" y2="12.3" stroke="#50CD9C" stroke-width="8" stroke-linecap="round"/></svg>
<div class="t" style="left:640.50px;top:510.92px;font-size:21px;color:#242424;letter-spacing:0.225px;">local-doris</div>
<svg style="left:583px;top:563.15px;" width="9" height="15.5" viewBox="0 0 9 15.5"><path d="M0 0 L9 7.75 L0 15.5 Z" fill="#3C4858"/></svg>
<svg style="left:608.5px;top:558.15px;" width="25" height="25" viewBox="0 0 25 25"><circle cx="12.5" cy="12.5" r="11.4" fill="none" stroke="#6DB33F" stroke-width="2.3"/><path d="M6.6 18.2 Q4.6 9.5 12.5 6 Q17 4.3 20.6 6.8 L12.8 12.6 Q10.2 13.5 9.6 17.8 Z" fill="#6DB33F"/></svg>
<div class="t" style="left:640.50px;top:560.57px;font-size:21px;color:#242424;letter-spacing:0.456px;">gp-y5u4kinztk4i2oy</div>
<svg style="left:583px;top:612.8px;" width="9" height="15.5" viewBox="0 0 9 15.5"><path d="M0 0 L9 7.75 L0 15.5 Z" fill="#3C4858"/></svg>
<svg style="left:608.7px;top:609.5px;" width="25.5" height="17.5" viewBox="0 0 25.5 17.5"><path d="M0.3 14.9 L4.3 13.2 Q8 10 10 9.1 Q13 8.5 15.2 7.4 Q17 5.5 18.4 2.8 L20.5 1.1 L24.9 0.9 L22.3 4.4 Q21 8 20 12 L21.1 14.1 L18.3 13.7 L16.3 13.2 L13.5 16.4 L14.2 12.6 Q10 13.5 7 14.1 L1.6 16.4 Z" fill="#B0885E" stroke="#4A3320" stroke-width="0.7" stroke-linejoin="round"/></svg>
<div class="t" style="left:640.50px;top:610.22px;font-size:21px;color:#242424;letter-spacing:0.674px;">office-mariadb-82-27017</div>
<svg style="left:583px;top:662.45px;" width="9" height="15.5" viewBox="0 0 9 15.5"><path d="M0 0 L9 7.75 L0 15.5 Z" fill="#3C4858"/></svg>
<svg style="left:608px;top:655.95px;" width="26" height="26" viewBox="0 0 26 26"><text x="0" y="22" font-family="Liberation Sans" font-size="9" font-weight="bold" fill="#2E6A96" font-style="italic">My</text><text x="12" y="23" font-family="Liberation Sans" font-size="9" fill="#E48E00">SQL</text><path d="M15 3 Q20 5 21 10 Q22 14 24 15 Q20 14 19 9 Q18 6 15 3 Z" fill="none" stroke="#2E6A96" stroke-width="1"/></svg>
<div class="t" style="left:640.50px;top:659.87px;font-size:21px;color:#242424;letter-spacing:0.628px;">110-mysql</div>
<svg style="left:583px;top:712.1px;" width="9" height="15.5" viewBox="0 0 9 15.5"><path d="M0 0 L9 7.75 L0 15.5 Z" fill="#3C4858"/></svg>
<svg style="left:608px;top:710.1px;" width="26" height="19" viewBox="0 0 26 19"><rect x="1" y="3" width="24" height="13" rx="6.5" fill="none" stroke="#D9342B" stroke-width="1.6"/><text x="13" y="12.5" text-anchor="middle" font-family="Liberation Sans" font-size="6" fill="#D9342B">ORACLE</text></svg>
<div class="t" style="left:640.50px;top:709.52px;font-size:21px;color:#242424;letter-spacing:0.778px;">office-oracle-101-11521</div>
<svg style="left:583px;top:761.75px;" width="9" height="15.5" viewBox="0 0 9 15.5"><path d="M0 0 L9 7.75 L0 15.5 Z" fill="#3C4858"/></svg>
<svg style="left:608.5px;top:757.25px;" width="25" height="24" viewBox="0 0 25 24"><g fill="#C9302C"><path d="M0 15 L12.5 20.5 L25 15 L25 18 L12.5 24 L0 18 Z"/>
<path d="M0 9.5 L12.5 15 L25 9.5 L25 12.8 L12.5 18.5 L0 12.8 Z"/>
<path d="M0 6.5 L12.5 1 L25 6.5 L12.5 12.5 Z"/></g>
<g fill="#fff"><circle cx="12.5" cy="4.2" r="1.2"/><circle cx="7.5" cy="7" r="1.2"/><circle cx="17.5" cy="7" r="1.2"/></g></svg>
<div class="t" style="left:640.50px;top:759.17px;font-size:21px;color:#242424;letter-spacing:0.412px;">re-00vz23ms3a9x294</div>
<svg style="left:583px;top:811.4px;" width="9" height="15.5" viewBox="0 0 9 15.5"><path d="M0 0 L9 7.75 L0 15.5 Z" fill="#3C4858"/></svg>
<svg style="left:608.5px;top:806.4px;" width="25" height="25" viewBox="0 0 25 25"><path d="M6 8 Q14 0 24 7 Q16 4 9 10 Z" fill="#C9302C"/><path d="M4 24 Q2 16 9 12 Q16 10 14 18 Q12 24 4 24 Z" fill="none" stroke="#555" stroke-width="1.2"/><path d="M8 3 L11 22" stroke="#C9302C" stroke-width="1.5"/></svg>
<div class="t" style="left:640.50px;top:808.82px;font-size:21px;color:#242424;letter-spacing:0.456px;">ms-1w7u2804usi0ggx</div>
<svg style="left:583px;top:861.05px;" width="9" height="15.5" viewBox="0 0 9 15.5"><path d="M0 0 L9 7.75 L0 15.5 Z" fill="#3C4858"/></svg>
<svg style="left:610px;top:855.55px;" width="24" height="26.5" viewBox="0 0 24 26.5"><path d="M12 0.5 L23.5 7 L23.5 19.5 L12 26 L0.5 19.5 L0.5 7 Z" fill="#C62C2C"/><path d="M6.5 7.5 L17.5 7.5 L17.5 10 L13.5 12 L13.5 21.5 L10.5 19.8 L10.5 11.5 L6.5 10 Z" fill="#fff"/></svg>
<div class="t" style="left:640.50px;top:858.47px;font-size:21px;color:#242424;letter-spacing:0.750px;">ti-u7611b2n3y9i0v4</div>
<svg style="left:570px;top:910.8px;" width="6" height="15" viewBox="0 0 6 15"><path d="M0 0 L6 7.5 L0 15 Z" fill="#3C4858"/></svg>
<svg style="left:592.5px;top:906.8px;" width="25" height="24" viewBox="0 0 25 24"><rect x="0" y="0" width="24.5" height="18.6" rx="2.2" fill="#8E8E8E"/>
<polyline points="4,12.5 8.8,7.2 13,11 20,4.5" fill="none" stroke="#fff" stroke-width="2.6" stroke-linejoin="round" stroke-linecap="round"/>
<rect x="3.4" y="21" width="17.4" height="3" rx="1.4" fill="#8E8E8E"/></svg>
<div class="t" style="left:623.00px;top:908.22px;font-size:21px;color:#242424;letter-spacing:-1.158px;">Env2</div>
<svg style="left:570px;top:960.5px;" width="6" height="15" viewBox="0 0 6 15"><path d="M0 0 L6 7.5 L0 15 Z" fill="#3C4858"/></svg>
<svg style="left:592.5px;top:956.5px;" width="25" height="24" viewBox="0 0 25 24"><rect x="0" y="0" width="24.5" height="18.6" rx="2.2" fill="#8E8E8E"/>
<polyline points="4,12.5 8.8,7.2 13,11 20,4.5" fill="none" stroke="#fff" stroke-width="2.6" stroke-linejoin="round" stroke-linecap="round"/>
<rect x="3.4" y="21" width="17.4" height="3" rx="1.4" fill="#8E8E8E"/></svg>
<div class="t" style="left:623.00px;top:957.92px;font-size:21px;color:#242424;letter-spacing:-0.097px;">Test Environment</div>
<div style="left:975.5px;top:387px;width:41.5px;height:42px;background:#fff;border:1px solid #EBEBEB;box-shadow:0 2px 3px rgba(0,0,0,0.18);box-sizing:border-box"></div>
<svg style="left:983.5px;top:396px;" width="26" height="24" viewBox="0 0 26 24"><g stroke="#555" stroke-width="1.8"><line x1="0" y1="1" x2="24" y2="1"/><line x1="0" y1="11.5" x2="16" y2="11.5"/><line x1="0" y1="22" x2="24" y2="22"/></g><path d="M25 6.5 L19 11.5 L25 16.5 Z" fill="#555"/></svg>
<div style="left:1021px;top:381px;width:175.5px;height:51.5px;background:#F2F2F2;border-left:2px solid #DCDCDC;border-bottom:1.5px solid #D9D9D9"></div>
<div style="left:1196px;top:381px;width:142.5px;height:51.5px;background:#F2F2F2;border-left:2px solid #DCDCDC;border-bottom:1.5px solid #D9D9D9"></div>
<div style="left:1338px;top:381px;width:118.5px;height:51.5px;background:#F2F2F2;border-left:2px solid #DCDCDC;border-bottom:1.5px solid #D9D9D9"></div>
<div style="left:1456px;top:381px;width:217.5px;height:51.5px;background:#F2F2F2;border-left:2px solid #DCDCDC;border-bottom:1.5px solid #D9D9D9"></div>
<div style="left:1673px;top:381px;width:118.5px;height:51.5px;background:#F2F2F2;border-left:2px solid #DCDCDC;border-bottom:1.5px solid #D9D9D9"></div>
<div style="left:1791px;top:381px;width:142.5px;height:51.5px;background:#F2F2F2;border-left:2px solid #DCDCDC;border-bottom:1.5px solid #D9D9D9"></div>
<svg style="left:1038.7px;top:398.7px;" width="25.5" height="17.5" viewBox="0 0 25.5 17.5"><path d="M0.3 14.9 L4.3 13.2 Q8 10 10 9.1 Q13 8.5 15.2 7.4 Q17 5.5 18.4 2.8 L20.5 1.1 L24.9 0.9 L22.3 4.4 Q21 8 20 12 L21.1 14.1 L18.3 13.7 L16.3 13.2 L13.5 16.4 L14.2 12.6 Q10 13.5 7 14.1 L1.6 16.4 Z" fill="#B0885E" stroke="#4A3320" stroke-width="0.7" stroke-linejoin="round"/></svg>
<div class="t" style="left:1074.00px;top:395.97px;font-size:21px;color:#222;">afanqie</div>
<svg style="left:1157.5px;top:403.5px;" width="13" height="13" viewBox="0 0 13 13"><path d="M1 1 L12 12 M12 1 L1 12" stroke="#333" stroke-width="1.7"/></svg>
<svg style="left:1213.5px;top:397.0px;" width="25" height="25" viewBox="0 0 25 25"><circle cx="12.5" cy="12.5" r="11.4" fill="none" stroke="#6DB33F" stroke-width="2.3"/><path d="M6.6 18.2 Q4.6 9.5 12.5 6 Q17 4.3 20.6 6.8 L12.8 12.6 Q10.2 13.5 9.6 17.8 Z" fill="#6DB33F"/></svg>
<div class="t" style="left:1248.75px;top:395.97px;font-size:21px;color:#222;">test</div>
<svg style="left:1300px;top:403.5px;" width="13" height="13" viewBox="0 0 13 13"><path d="M1 1 L12 12 M12 1 L1 12" stroke="#333" stroke-width="1.7"/></svg>
<svg style="left:1356px;top:397.5px;" width="25" height="24" viewBox="0 0 25 24"><g fill="#C9302C"><path d="M0 15 L12.5 20.5 L25 15 L25 18 L12.5 24 L0 18 Z"/>
<path d="M0 9.5 L12.5 15 L25 9.5 L25 12.8 L12.5 18.5 L0 12.8 Z"/>
<path d="M0 6.5 L12.5 1 L25 6.5 L12.5 12.5 Z"/></g>
<g fill="#fff"><circle cx="12.5" cy="4.2" r="1.2"/><circle cx="7.5" cy="7" r="1.2"/><circle cx="17.5" cy="7" r="1.2"/></g></svg>
<div class="t" style="left:1391.00px;top:395.97px;font-size:21px;color:#222;">0</div>
<svg style="left:1418px;top:403.5px;" width="13" height="13" viewBox="0 0 13 13"><path d="M1 1 L12 12 M12 1 L1 12" stroke="#333" stroke-width="1.7"/></svg>
<svg style="left:1474.5px;top:395.5px;" width="26" height="26" viewBox="0 0 26 26"><text x="0" y="22" font-family="Liberation Sans" font-size="9" font-weight="bold" fill="#2E6A96" font-style="italic">My</text><text x="12" y="23" font-family="Liberation Sans" font-size="9" fill="#E48E00">SQL</text><path d="M15 3 Q20 5 21 10 Q22 14 24 15 Q20 14 19 9 Q18 6 15 3 Z" fill="none" stroke="#2E6A96" stroke-width="1"/></svg>
<div class="t" style="left:1509.50px;top:395.97px;font-size:21px;color:#222;">hs_autotest</div>
<svg style="left:1634.5px;top:403.5px;" width="13" height="13" viewBox="0 0 13 13"><path d="M1 1 L12 12 M12 1 L1 12" stroke="#333" stroke-width="1.7"/></svg>
<svg style="left:1690.5px;top:397.5px;" width="25" height="24" viewBox="0 0 25 24"><g fill="#C9302C"><path d="M0 15 L12.5 20.5 L25 15 L25 18 L12.5 24 L0 18 Z"/>
<path d="M0 9.5 L12.5 15 L25 9.5 L25 12.8 L12.5 18.5 L0 12.8 Z"/>
<path d="M0 6.5 L12.5 1 L25 6.5 L12.5 12.5 Z"/></g>
<g fill="#fff"><circle cx="12.5" cy="4.2" r="1.2"/><circle cx="7.5" cy="7" r="1.2"/><circle cx="17.5" cy="7" r="1.2"/></g></svg>
<div class="t" style="left:1726.00px;top:395.97px;font-size:21px;color:#222;">1</div>
<svg style="left:1752.5px;top:403.5px;" width="13" height="13" viewBox="0 0 13 13"><path d="M1 1 L12 12 M12 1 L1 12" stroke="#333" stroke-width="1.7"/></svg>
<svg style="left:1812px;top:397.0px;" width="21" height="26" viewBox="0 0 21 26"><line x1="5.3" y1="3.6" x2="9.7" y2="7.5" stroke="#2FB5DC" stroke-width="7.2" stroke-linecap="round"/>
<path d="M0.9 7.6 L0.9 17.6 L6.8 12.4 Z" fill="#5068B8" stroke="#5068B8" stroke-width="1.4" stroke-linejoin="round"/>
<line x1="4.9" y1="21.8" x2="16.4" y2="12.3" stroke="#50CD9C" stroke-width="8" stroke-linecap="round"/></svg>
<div class="t" style="left:1844.50px;top:395.97px;font-size:21px;color:#222;">test</div>
<svg style="left:1895px;top:403.5px;" width="13" height="13" viewBox="0 0 13 13"><path d="M1 1 L12 12 M12 1 L1 12" stroke="#333" stroke-width="1.7"/></svg>
<div style="left:1933px;top:381px;width:264px;height:51.5px;background:#fff;border-left:2px solid #DCDCDC;border-right:2px solid #DCDCDC"></div>
<svg style="left:1952.5px;top:398px;" width="24" height="23" viewBox="0 0 24 23"><rect x="1.2" y="1.2" width="21.6" height="20.6" rx="2.5" fill="none" stroke="#333" stroke-width="2.4"/><g stroke="#333" stroke-width="2"><line x1="1" y1="7.5" x2="23" y2="7.5"/><line x1="1" y1="14.5" x2="23" y2="14.5"/><line x1="8.5" y1="7.5" x2="8.5" y2="22"/><line x1="15.5" y1="7.5" x2="15.5" y2="22"/></g></svg>
<div class="t" style="left:1986.25px;top:395.97px;font-size:21px;color:#3DA3E3;letter-spacing:-0.133px;">Create new table</div>
<svg style="left:2159.5px;top:403.5px;" width="13" height="13" viewBox="0 0 13 13"><path d="M1 1 L12 12 M12 1 L1 12" stroke="#333" stroke-width="1.7"/></svg>
<div style="left:2197px;top:431.5px;width:450px;height:1.5px;background:#D9D9D9"></div>
<svg style="left:2618px;top:403px;" width="17.5" height="10" viewBox="0 0 17.5 10"><path d="M1 1 L8.75 9 L16.5 1" fill="none" stroke="#111" stroke-width="2.8"/></svg>
<svg style="left:993px;top:445.5px;" width="21" height="26" viewBox="0 0 21 26"><line x1="5.3" y1="3.6" x2="9.7" y2="7.5" stroke="#2FB5DC" stroke-width="7.2" stroke-linecap="round"/>
<path d="M0.9 7.6 L0.9 17.6 L6.8 12.4 Z" fill="#5068B8" stroke="#5068B8" stroke-width="1.4" stroke-linejoin="round"/>
<line x1="4.9" y1="21.8" x2="16.4" y2="12.3" stroke="#50CD9C" stroke-width="8" stroke-linecap="round"/></svg>
<div class="t" style="left:1024.25px;top:447.88px;font-size:21.4px;color:#111;font-weight:700;letter-spacing:0.033px;">local-doris.test</div>
<div style="left:2476px;top:437.5px;width:93px;height:39.5px;background:#38A6E8;box-shadow:0 2px 2px rgba(0,0,0,0.08)"></div>
<div class="t" style="left:2490.50px;top:448.45px;font-size:20.5px;color:#fff;letter-spacing:0.050px;">Submit</div>
<div style="left:2585px;top:438px;width:53px;height:39px;background:#fff;border:2px solid #D5D5D5"></div>
<svg style="left:2600px;top:446.5px;" width="23" height="23" viewBox="0 0 25 25"><path d="M22.1 17 A10.6 10.6 0 1 1 22.1 8" fill="none" stroke="#222" stroke-width="2"/><path d="M23.6 12 L18.6 8.6 L23.8 6.6 Z" fill="#222"/></svg>
<div style="left:990px;top:483.5px;width:332px;height:832px;border:2px solid #CDCDCD;border-bottom:none;background:#fff"></div>
<div style="left:992px;top:485.5px;width:328px;height:38px;background:#F0F0F0;border-bottom:2px solid #D2D2D2"></div>
<div style="left:1154.5px;top:485.5px;width:1.5px;height:38px;background:#D2D2D2"></div>
<div class="t" style="left:1033.40px;top:494.62px;font-size:20.3px;color:#ABABAB;letter-spacing:-0.004px;">Increase</div>
<div class="t" style="left:1208.50px;top:494.62px;font-size:20.3px;color:#ABABAB;letter-spacing:0.100px;">Delete</div>
<div style="left:1311.5px;top:533px;width:8.5px;height:782px;background:#E6E6E6;border-radius:4px 4px 0 0"></div>
<div style="left:1030.4px;top:533px;width:114px;height:39.5px;background:#B3DEF8;border-radius:4px"></div>
<div class="t" style="left:1039.00px;top:542.48px;font-size:20.7px;color:#333;font-weight:700;">Table Info</div>
<div class="t" style="left:1039.00px;top:582.18px;font-size:20.7px;color:#444;font-weight:700;letter-spacing:-0.430px;">Column</div>
<svg style="left:1004.3px;top:632.8px;" width="11.7" height="7.4" viewBox="0 0 11.7 7.4"><path d="M0 0 L11.7 0 L5.85 7.4 Z" fill="#444"/></svg>
<div class="t" style="left:1039.00px;top:621.48px;font-size:20.7px;color:#444;font-weight:700;letter-spacing:-1.363px;">Key</div>
<div class="t" style="left:1052.50px;top:661.18px;font-size:20.7px;color:#277227;font-weight:700;letter-spacing:-0.458px;">Columns</div>
<svg style="left:1004.3px;top:712px;" width="11.7" height="7.4" viewBox="0 0 11.7 7.4"><path d="M0 0 L11.7 0 L5.85 7.4 Z" fill="#444"/></svg>
<div class="t" style="left:1039.00px;top:701.48px;font-size:20.7px;color:#444;font-weight:700;letter-spacing:-0.238px;">Index</div>
<div class="t" style="left:1052.50px;top:740.18px;font-size:20.7px;color:#277227;font-weight:700;letter-spacing:-0.078px;">index_name</div>
<div style="left:1321px;top:483.5px;width:1318px;height:832px;border-top:2px solid #CDCDCD;border-right:2px solid #CDCDCD;background:#fff"></div>
<div class="t" style="left:1338.75px;top:519.65px;font-size:20.5px;color:#242424;letter-spacing:-0.281px;">Name:</div>
<div class="t" style="left:1338.75px;top:567.75px;font-size:20.5px;color:#242424;letter-spacing:0.179px;">Comment:</div>
<div class="t" style="left:1338.75px;top:615.85px;font-size:20.5px;color:#242424;letter-spacing:0.318px;">Bucket type:</div>
<div class="t" style="left:1338.75px;top:663.95px;font-size:20.5px;color:#242424;letter-spacing:0.075px;">Bucket No.:</div>
<div class="t" style="left:1338.75px;top:712.05px;font-size:20.5px;color:#242424;letter-spacing:-0.583px;">Key:</div>
<div style="left:1504px;top:510.0px;width:1091px;height:39px;border:2px solid #D6D6D6;background:#fff"></div>
<div style="left:1504px;top:558.1px;width:1091px;height:39px;border:2px solid #D6D6D6;background:#fff"></div>
<div style="left:1504px;top:606.2px;width:1091px;height:39px;border:2px solid #D6D6D6;background:#fff"></div>
<div style="left:1504px;top:654.3px;width:1091px;height:39px;border:2px solid #D6D6D6;background:#fff"></div>
<div class="t" style="left:1517.50px;top:519.65px;font-size:20.5px;color:#555;letter-spacing:0.097px;">table_name</div>
<div class="t" style="left:1519.50px;top:615.85px;font-size:20.5px;color:#BBBBBB;letter-spacing:0.100px;">Select</div>
<svg style="left:2561px;top:621px;" width="15.5" height="9" viewBox="0 0 15.5 9"><path d="M1 1 L7.75 8 L14.5 1" fill="none" stroke="#6C7480" stroke-width="2"/></svg>
<div style="left:1500.5px;top:698.5px;width:1099px;height:46.5px;border:3.5px solid #C9DDF3;background:#fff"></div>
<div style="left:1504px;top:702.5px;width:1091px;height:39px;border:2px solid #D3D3D3;background:#fff"></div>
<div class="t" style="left:1525.00px;top:711.23px;font-size:20.7px;color:#242424;letter-spacing:0.062px;">Duplicate key model</div>
<div style="left:1562.5px;top:710.5px;width:1.5px;height:28.5px;background:#111"></div>
<svg style="left:2561px;top:718px;" width="15.5" height="9" viewBox="0 0 15.5 9"><path d="M1 8 L7.75 1 L14.5 8" fill="none" stroke="#6C7480" stroke-width="2"/></svg>
<svg style="left:2600px;top:519.5px;" width="20.5" height="20.5" viewBox="0 0 20.5 20.5"><circle cx="10.25" cy="10.25" r="9.25" fill="none" stroke="#111" stroke-width="2" opacity="1"/><text x="10.25" y="14.555" text-anchor="middle" font-family="Liberation Sans" font-weight="bold" font-size="12.299999999999999" fill="#111" opacity="1">?</text></svg>
<svg style="left:2600px;top:567.6px;" width="20.5" height="20.5" viewBox="0 0 20.5 20.5"><circle cx="10.25" cy="10.25" r="9.25" fill="none" stroke="#111" stroke-width="2" opacity="1"/><text x="10.25" y="14.555" text-anchor="middle" font-family="Liberation Sans" font-weight="bold" font-size="12.299999999999999" fill="#111" opacity="1">?</text></svg>
<svg style="left:2600px;top:615.7px;" width="20.5" height="20.5" viewBox="0 0 20.5 20.5"><circle cx="10.25" cy="10.25" r="9.25" fill="none" stroke="#111" stroke-width="2" opacity="1"/><text x="10.25" y="14.555" text-anchor="middle" font-family="Liberation Sans" font-weight="bold" font-size="12.299999999999999" fill="#111" opacity="1">?</text></svg>
<svg style="left:2600px;top:663.8px;" width="20.5" height="20.5" viewBox="0 0 20.5 20.5"><circle cx="10.25" cy="10.25" r="9.25" fill="none" stroke="#111" stroke-width="2" opacity="1"/><text x="10.25" y="14.555" text-anchor="middle" font-family="Liberation Sans" font-weight="bold" font-size="12.299999999999999" fill="#111" opacity="1">?</text></svg>
<svg style="left:2600px;top:711.9px;" width="20.5" height="20.5" viewBox="0 0 20.5 20.5"><circle cx="10.25" cy="10.25" r="9.25" fill="none" stroke="#111" stroke-width="2" opacity="1"/><text x="10.25" y="14.555" text-anchor="middle" font-family="Liberation Sans" font-weight="bold" font-size="12.299999999999999" fill="#111" opacity="1">?</text></svg>
<div style="left:1504px;top:750px;width:1117.5px;height:139px;background:#fff;border-radius:8px;box-shadow:0 3px 10px rgba(0,0,0,0.13), 0 0 2px rgba(0,0,0,0.08)"></div>
<div class="t" style="left:1531.25px;top:764.06px;font-size:20.6px;color:#242424;letter-spacing:0.008px;">Unique key model</div>
<div class="t" style="left:1531.25px;top:810.06px;font-size:20.6px;color:#242424;letter-spacing:0.076px;">Aggregate key model</div>
<div class="t" style="left:1531.25px;top:856.31px;font-size:20.6px;color:#3EA6E6;letter-spacing:0.111px;">Duplicate key model</div>
<div style="left:568px;top:308px;width:2081px;height:1008px;border:2px solid #000;background:transparent"></div>
</body></html>
